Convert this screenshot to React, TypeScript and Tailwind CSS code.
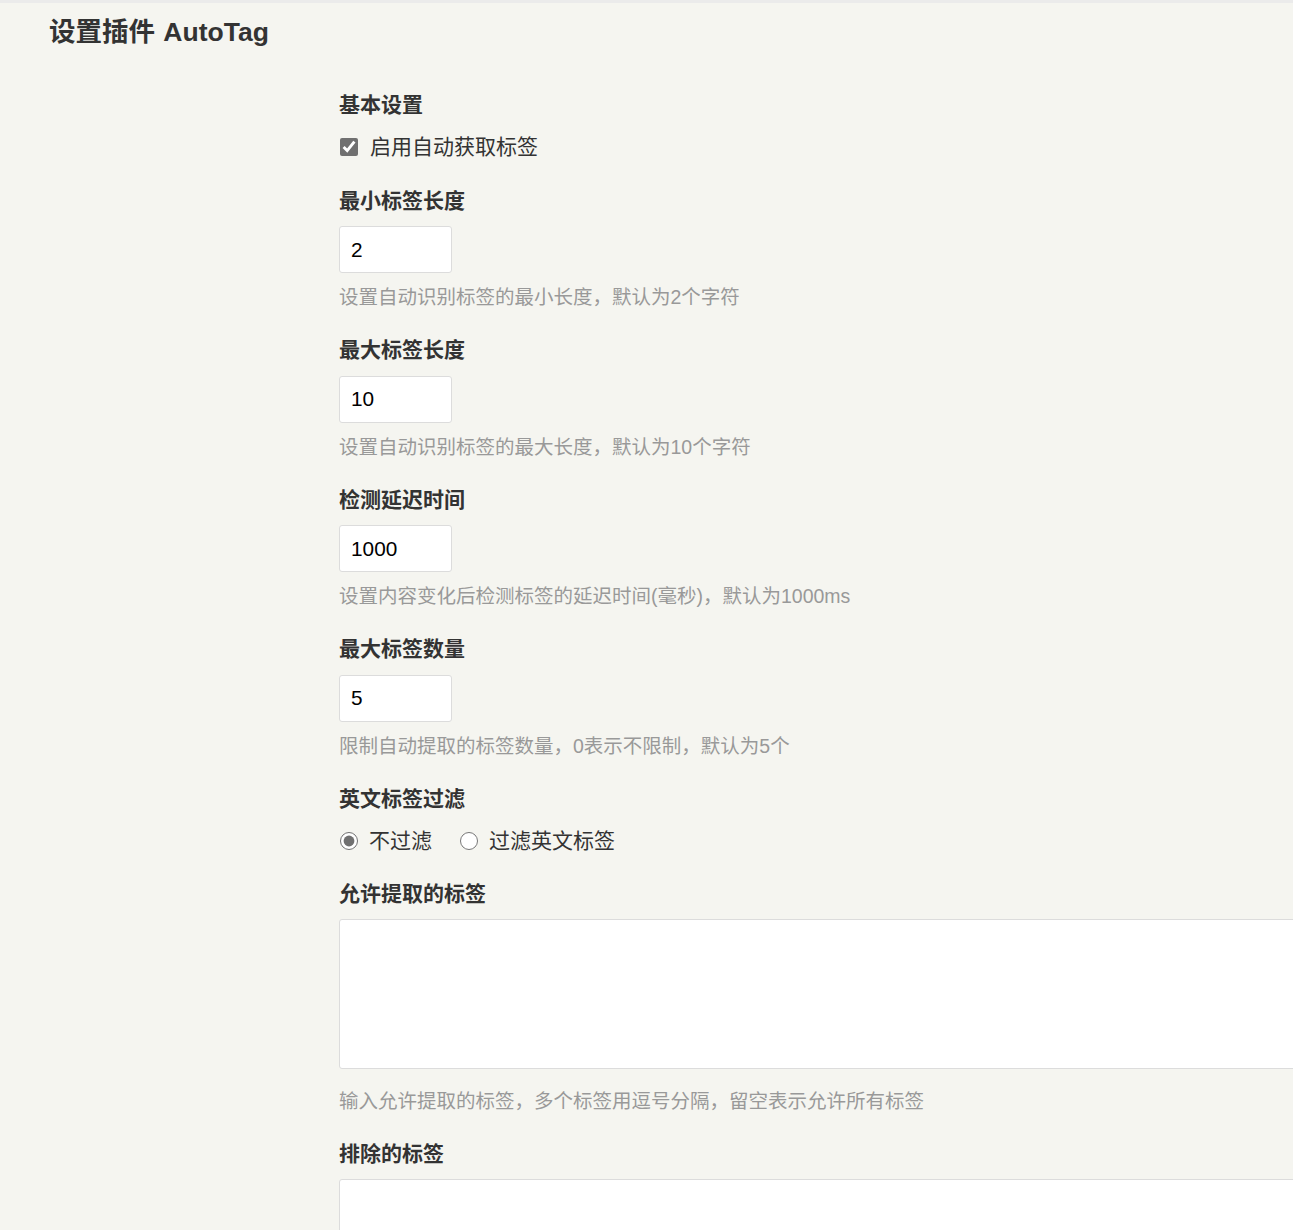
import { useState } from 'react';

/* ─── shared bits ───────────────────────────────────────────────────── */
const font = "font-['Liberation_Sans','Noto_Sans_CJK_SC',sans-serif]";

const Heading = ({ children }: { children: React.ReactNode }) => (
  <h3 className="text-[21px] leading-[31px] font-bold text-[#333]">
    {children}
  </h3>
);

const Desc = ({ children }: { children: React.ReactNode }) => (
  <p className="text-[19.5px] leading-[29px] text-[#999]">{children}</p>
);

const NumberField = ({
  label,
  value,
  desc,
  onChange,
}: {
  label: string;
  value: string;
  desc: string;
  onChange: (v: string) => void;
}) => (
  <div className="mt-[22px]">
    <Heading>{label}</Heading>
    <input
      type="text"
      value={value}
      onChange={(e) => onChange(e.target.value)}
      className="mt-[10.5px] block h-[47px] w-[113px] rounded-[3px] border border-[#dcdcdc] bg-white px-[11px] text-[20.8px] text-black outline-none"
    />
    <div className="mt-[10px]">
      <Desc>{desc}</Desc>
    </div>
  </div>
);

/* ─── page ──────────────────────────────────────────────────────────── */
export default function App() {
  const [enabled, setEnabled] = useState(true);
  const [minLen, setMinLen] = useState('2');
  const [maxLen, setMaxLen] = useState('10');
  const [delay, setDelay] = useState('1000');
  const [maxCount, setMaxCount] = useState('5');
  const [filter, setFilter] = useState<'none' | 'english'>('none');
  const [allowed, setAllowed] = useState('');
  const [excluded, setExcluded] = useState('');

  return (
    <div
      className={`${font} min-h-screen overflow-hidden border-t-[3px] border-[#ebebeb] bg-[#f5f5f0]`}
    >
      <h1 className="pt-[9.5px] pl-[49px] text-[26.5px] leading-[39px] font-bold text-[#333] [word-spacing:1px]">
        设置插件 AutoTag
      </h1>

      <div className="pl-[339px] pt-[37px]">
        {/* 基本设置 */}
        <Heading>基本设置</Heading>
        <label className="mt-[12px] flex h-[31px] items-center gap-[12px] text-[21px] text-[#333]">
          <input
            type="checkbox"
            checked={enabled}
            onChange={(e) => setEnabled(e.target.checked)}
            className="m-0 ml-[1px] h-[18px] w-[18px] accent-[#707070]"
          />
          启用自动获取标签
        </label>

        <NumberField
          label="最小标签长度"
          value={minLen}
          onChange={setMinLen}
          desc="设置自动识别标签的最小长度，默认为2个字符"
        />
        <NumberField
          label="最大标签长度"
          value={maxLen}
          onChange={setMaxLen}
          desc="设置自动识别标签的最大长度，默认为10个字符"
        />
        <NumberField
          label="检测延迟时间"
          value={delay}
          onChange={setDelay}
          desc="设置内容变化后检测标签的延迟时间(毫秒)，默认为1000ms"
        />
        <NumberField
          label="最大标签数量"
          value={maxCount}
          onChange={setMaxCount}
          desc="限制自动提取的标签数量，0表示不限制，默认为5个"
        />

        {/* 英文标签过滤 */}
        <div className="mt-[22px]">
          <Heading>英文标签过滤</Heading>
          <div className="mt-[12px] flex h-[31px] items-center text-[21px] text-[#333]">
            <label className="flex items-center gap-[11px]">
              <input
                type="radio"
                name="filter"
                checked={filter === 'none'}
                onChange={() => setFilter('none')}
                className="m-0 ml-[1px] h-[18px] w-[18px] accent-[#707070]"
              />
              不过滤
            </label>
            <label className="ml-[28px] flex items-center gap-[11px]">
              <input
                type="radio"
                name="filter"
                checked={filter === 'english'}
                onChange={() => setFilter('english')}
                className="m-0 h-[18px] w-[18px] accent-[#707070]"
              />
              过滤英文标签
            </label>
          </div>
        </div>

        {/* 允许提取的标签 */}
        <div className="mt-[21px]">
          <Heading>允许提取的标签</Heading>
          <textarea
            value={allowed}
            onChange={(e) => setAllowed(e.target.value)}
            className="mt-[10.5px] block h-[150px] w-[1100px] resize-none rounded-[3px] border border-[#dcdcdc] bg-white p-[10px] text-[20.8px] outline-none"
          />
          <div className="mt-[17.5px]">
            <Desc>输入允许提取的标签，多个标签用逗号分隔，留空表示允许所有标签</Desc>
          </div>
        </div>

        {/* 排除的标签 */}
        <div className="mt-[22px]">
          <Heading>排除的标签</Heading>
          <textarea
            value={excluded}
            onChange={(e) => setExcluded(e.target.value)}
            className="mt-[10.5px] block h-[150px] w-[1100px] resize-none rounded-[3px] border border-[#dcdcdc] bg-white p-[10px] text-[20.8px] outline-none"
          />
        </div>
      </div>
    </div>
  );
}
